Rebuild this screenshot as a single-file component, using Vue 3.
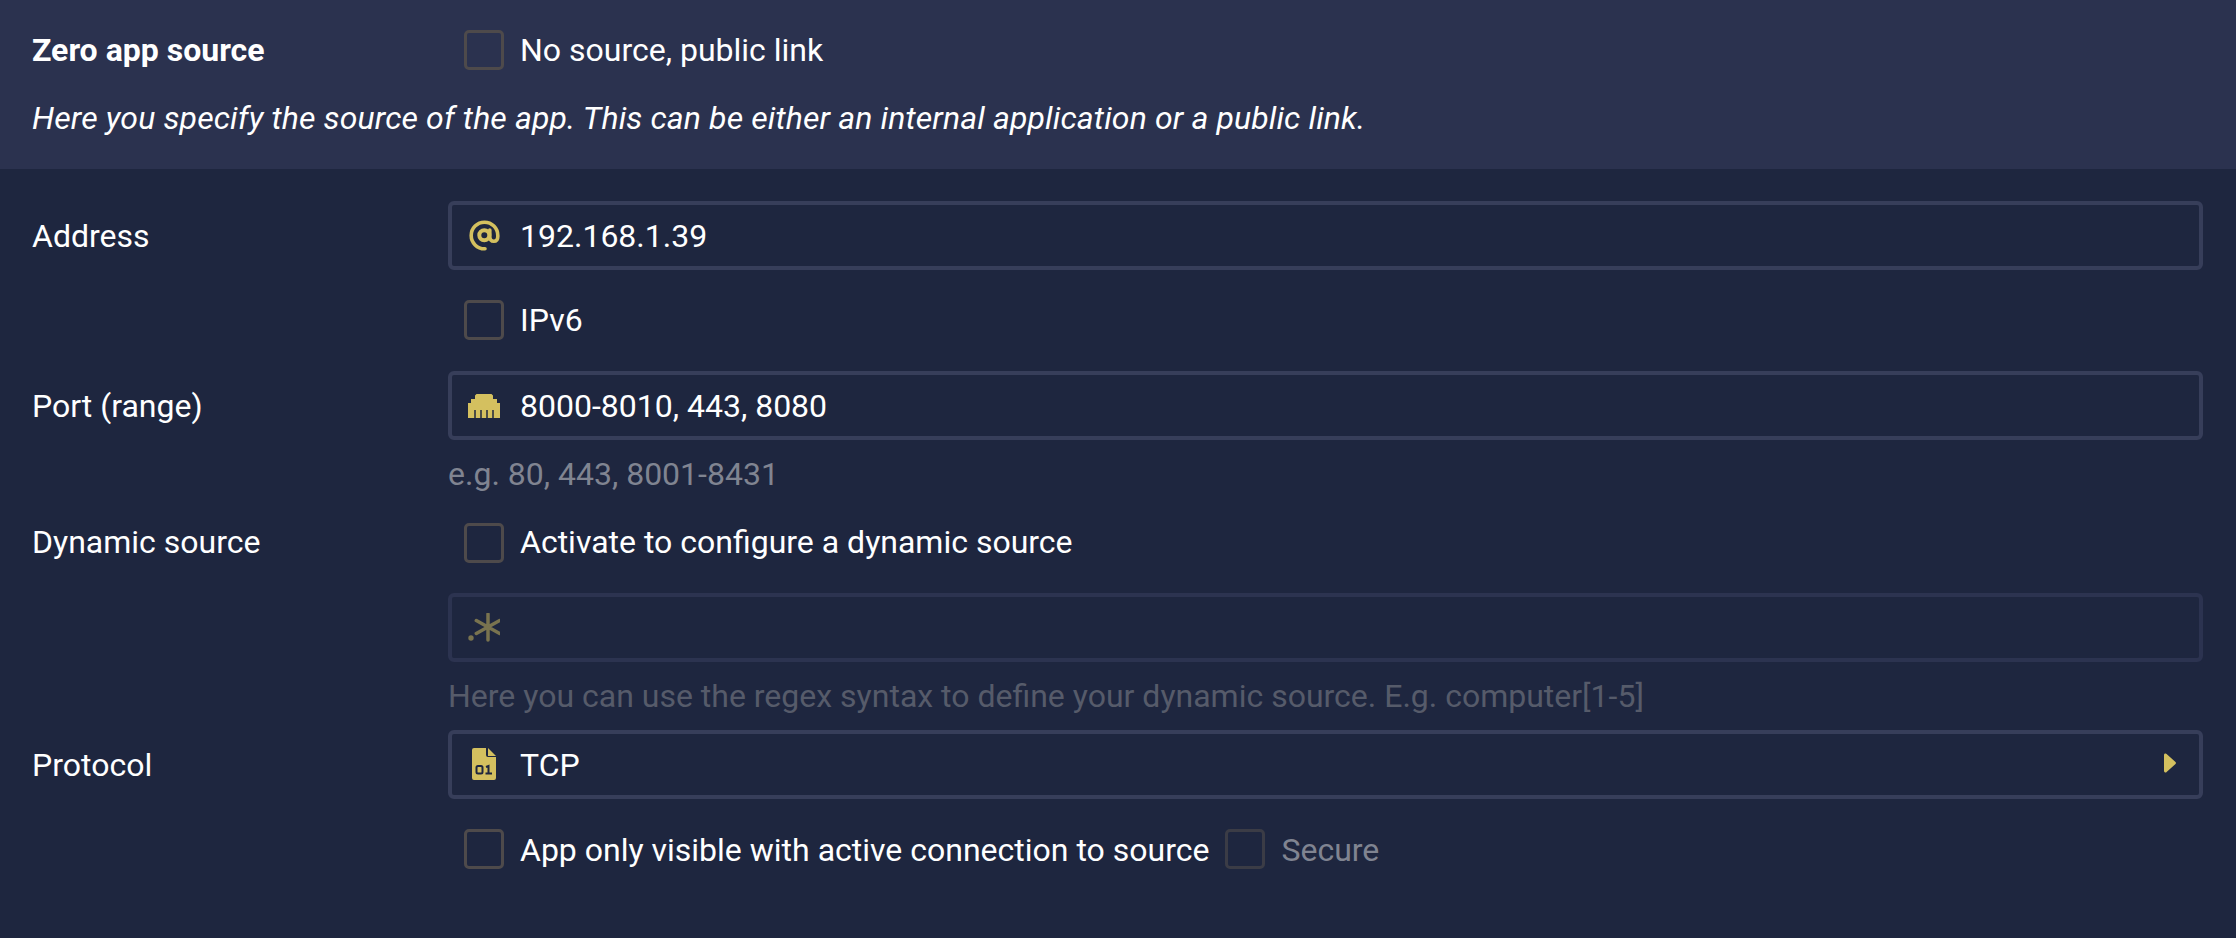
<script setup>
</script>

<template>
  <div class="page">
    <section class="head">
      <div class="row">
        <div class="label strong">Zero app source</div>
        <div class="checks">
          <label class="check"><span class="box"></span><span>No source, public link</span></label>
        </div>
      </div>
      <p class="desc">Here you specify the source of the app. This can be either an internal application or a public link.</p>
    </section>

    <section class="body">
      <div class="row">
        <div class="label">Address</div>
        <div class="field">
          <span class="icon">
            <svg width="31" height="31" viewBox="0 0 31 31" fill="none" stroke="#d4c05f" stroke-width="3.600" stroke-linecap="round">
              <path d="M16 28.800H15.500A13.300 13.300 0 1 1 28.800 15.500v1c0 3-1.500 4.800-4 4.800s-4-1.800-4-4.800V10"/>
              <circle cx="15.300" cy="15.300" r="5" stroke-width="4"/>
            </svg>
          </span>
          <span>192.168.1.39</span>
        </div>
      </div>
      <div class="row gap30">
        <div class="label"></div>
        <div class="checks"><label class="check"><span class="box"></span><span>IPv6</span></label></div>
      </div>
      <div class="row gap31">
        <div class="label">Port (range)</div>
        <div class="field">
          <span class="icon">
            <svg width="32" height="24" viewBox="0 0 32 24">
              <path fill="#d4c05f" d="M7 1.500L8.500 0h15L25 1.500V5h4v4h3v15H0V9h3V5h4z"/>
              <path stroke="#1e263f" stroke-width="1.500" d="M7 16v8M13 16v8M19 16v8M25 16v8"/>
            </svg>
          </span>
          <span>8000-8010, 443, 8080</span>
        </div>
      </div>
      <div class="offset hint">e.g. 80, 443, 8001-8431</div>
      <div class="row gap28">
        <div class="label lift">Dynamic source</div>
        <div class="checks"><label class="check"><span class="box"></span><span class="lift">Activate to configure a dynamic source</span></label></div>
      </div>
      <div class="row gap30">
        <div class="label"></div>
        <div class="field disabled">
          <span class="icon dim">
            <svg width="32" height="30" viewBox="0 0 32 30" fill="none" stroke="#d4c05f" stroke-width="3.500" stroke-linecap="round">
              <circle cx="3" cy="25" r="2.700" fill="#d4c05f" stroke="none"/>
              <path d="M20 1v26M8.300 7.500l23.400 13M31.700 7.500l-23.400 13"/>
            </svg>
          </span>
        </div>
      </div>
      <div class="offset hint faint">Here you can use the regex syntax to define your dynamic source. E.g. computer[1-5]</div>
      <div class="row gap13">
        <div class="label">Protocol</div>
        <div class="field">
          <span class="icon">
            <svg class="file" width="24" height="32" viewBox="0 0 24 32">
              <path fill="#d4c05f" d="M2 0h12v7a2 2 0 0 0 2 2h8v21a2 2 0 0 1-2 2H2a2 2 0 0 1-2-2V2a2 2 0 0 1 2-2zM16 0l8 8h-8z"/>
              <g fill="none" stroke="#1e263f" stroke-width="2">
                <rect x="4.500" y="18" width="6" height="7.500" rx="1.500"/>
                <path d="M14 19l2.500-1v7.500M13.500 25.500h6.500"/>
              </g>
            </svg>
          </span>
          <span>TCP</span>
          <svg class="caret" width="12" height="20" viewBox="0 0 12 20">
            <path fill="#d4c05f" d="M0 2a1.500 1.500 0 0 1 2.600-1L11.500 9a1.500 1.500 0 0 1 0 2L2.600 19A1.500 1.500 0 0 1 0 18z"/>
          </svg>
        </div>
      </div>
      <div class="row gap30">
        <div class="label"></div>
        <div class="checks">
          <label class="check"><span class="box"></span><span class="drop">App only visible with active connection to source</span></label>
          <label class="check muted"><span class="box faintbox"></span><span class="drop">Secure</span></label>
        </div>
      </div>
    </section>
  </div>
</template>

<style>
html, body { margin: 0; background: #1e263f; }
</style>

<style scoped>
.page {
  width: 2236px;
  height: 938px;
  background: #1e263f;
  color: #fff;
  font-family: Roboto, "Liberation Sans", sans-serif;
  font-size: 32px;
  overflow: hidden;
}
.head {
  box-sizing: border-box;
  height: 169px;
  background: #2b324f;
  padding: 30px 33px 0 32px;
}
.body {
  padding: 32px 33px 0 32px;
}
.row {
  display: grid;
  grid-template-columns: 416px 1fr;
  align-items: center;
}
.label { line-height: 40px; }
.strong { font-weight: 700; }
.desc {
  margin: 26px 0 0;
  font-style: italic;
  letter-spacing: 0.13px;
  line-height: 44px;
}
.checks {
  display: flex;
  gap: 16px;
  padding-left: 16px;
}
.check {
  display: flex;
  align-items: center;
  gap: 16px;
  line-height: 40px;
  white-space: nowrap;
}
.muted { color: #808491; }
.box {
  box-sizing: border-box;
  width: 40px;
  height: 40px;
  border: 3px solid #4e4a4b;
  border-radius: 5px;
}
.faintbox { border-color: #3b3c46; }
.field {
  box-sizing: border-box;
  height: 69px;
  display: flex;
  align-items: center;
  border: 4px solid #373e5a;
  border-radius: 6px;
  padding: 0 23px 0 8px;
}
.disabled { border-color: #2c3350; }
.icon {
  width: 48px;
  margin-right: 12px;
  display: flex;
  align-items: center;
  justify-content: center;
}
.dim { opacity: 0.5; }
.caret { margin-left: auto; margin-bottom: 4px; }
.file { margin-bottom: 2px; }
.lift { transform: translateY(-1px); }
.drop { transform: translateY(1px); }
.gap30 { margin-top: 30px; }
.gap31 { margin-top: 31px; }
.gap28 { margin-top: 28px; }
.gap13 { margin-top: 13px; }
.offset { margin-left: 416px; }
.hint {
  margin-top: 13px;
  line-height: 42px;
  color: #808491;
}
.faint { color: #565b6a; }
</style>
